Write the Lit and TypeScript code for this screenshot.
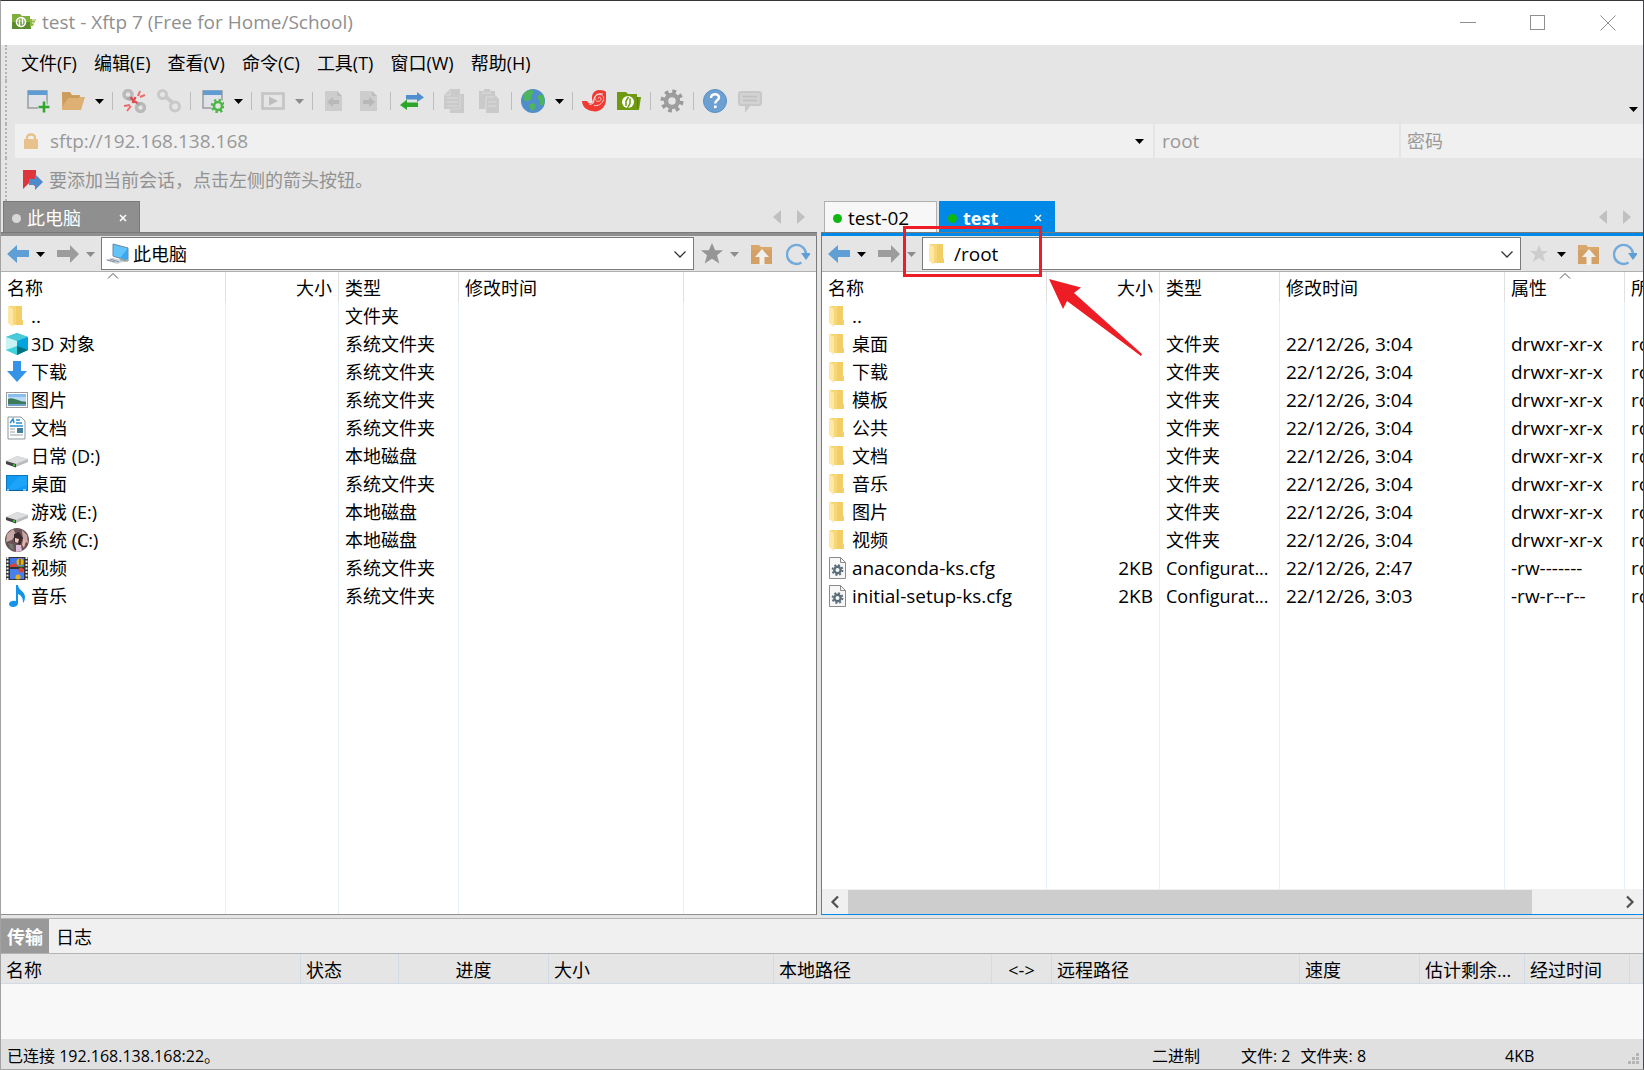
import { LitElement, html, css, svg, nothing } from "lit";
import { customElement, property } from "lit/decorators.js";
import { classMap } from "lit/directives/class-map.js";

const G = "#9c9c9c";

const shapes: Record<string, any> = {
  app: svg`<path d="M0 4h8l2 2h8v13H0z" fill="#7fae3c"/><path d="M0 12h19v7H0z" fill="#5c8c2e"/><path d="M18 9h6l-3 7h-2l-1 3z" fill="#8dba3f"/><path d="M20 10h3M20 13h2" stroke="#fff"/><circle cx="9" cy="12" r="4.500" fill="none" stroke="#fff" stroke-width="1.600"/><path d="M7.500 16V9.500M10.500 8v6.500" stroke="#fff" stroke-width="1.600"/>`,
  newwin: svg`<rect x="2" y="2" width="19" height="17" fill="#dfe2e6" stroke="#9a9da0" stroke-width="1.500"/><rect x="2" y="1.500" width="19" height="4.500" fill="#5f9cd3"/><path d="M18 12v12M12 18h12" stroke="#e5e5e5" stroke-width="5"/><path d="M18 12.500v11M12.500 18h11" stroke="#2fa72b" stroke-width="2.600"/>`,
  open: svg`<path d="M1 3h8l2 3h8v3H6L1 20z" fill="#d2a05f"/><path d="M1 20V9h6l2-1h15l-4 13H1z" fill="#dfb074"/><path d="M1 4h8l2 3h7v2H7L2 17z" fill="#cc9c5c"/>`,
  unlink: svg`<g fill="none" stroke="#b9b9b9" stroke-width="3.400"><circle cx="6" cy="5.500" r="4"/><circle cx="18.500" cy="18.500" r="4"/></g><path d="M5 9l4 2M15 14l3 2" stroke="#aaa" stroke-width="3"/><path d="M8.500 8l3 4 4 2M10.500 14l3-6" stroke="#df4c50" stroke-width="2.400"/><g stroke="#ec6a6c" stroke-width="2"><path d="M16 7l2-5M18 8l5-2M8 16l-6 1M9 17l-4 5"/></g>`,
  link: svg`<g fill="none" stroke="#c9c9c9" stroke-width="3"><circle cx="5.500" cy="5.500" r="4"/><circle cx="18" cy="17.500" r="4.500"/><path d="M9 8l7 6" stroke-width="4"/></g>`,
  wingear: svg`<rect x="3" y="2" width="19" height="17" fill="#dfe2e6" stroke="#9a9da0" stroke-width="1.500"/><rect x="3" y="1.500" width="19" height="4.500" fill="#5f9cd3"/><circle cx="18" cy="17" r="7" fill="#e5e5e5"/><circle cx="18" cy="17" r="4" fill="none" stroke="#4cb748" stroke-width="2.600"/><circle cx="18" cy="17" r="6" fill="none" stroke="#4cb748" stroke-width="2.500" stroke-dasharray="2.300 2.412"/>`,
  play: svg`<rect x="1.500" y="4.500" width="21" height="15" fill="none" stroke="#c4c4c4" stroke-width="2.600"/><path d="M8 7.500l9 4.500-9 4.500z" fill="#bdbdbd"/>`,
  docl: svg`<path d="M3 2h12l5 5v15H3z" fill="#cdcdcd"/><path d="M15 2l5 5h-5z" fill="#bdbdbd"/><path d="M5 13l6-5v3h6v4h-6v3z" fill="#b8b8b8"/>`,
  docr: svg`<path d="M3 2h12l5 5v15H3z" fill="#cdcdcd"/><path d="M15 2l5 5h-5z" fill="#bdbdbd"/><path d="M18 13l-6-5v3H6v4h6v3z" fill="#b8b8b8"/>`,
  swap: svg`<path d="M6 6h11V3l7 5.500L17 13v-2.500H6z" fill="#4f8fd0"/><path d="M18 13.500H7v-3L0 16l7 5v-3h11z" fill="#2ba62b"/>`,
  copy: svg`<path d="M7 0h10v5h4v19H7v-4H1V6z" fill="#cacaca"/><path d="M7 1v5H2M4 9h11M4 13h11M4 17h11" stroke="#dcdcdc" fill="none"/><path d="M17 6v14H8" stroke="#d8d8d8" fill="none"/>`,
  paste: svg`<path d="M1 2h5V0h6v2h5v4l4 4v14H8v-4H1z" fill="#cacaca"/><path d="M4 4h9M8 20V8h9M10 13h8M10 17h8" stroke="#dcdcdc" fill="none"/>`,
  globe: svg`<circle cx="12" cy="12" r="12" fill="#4f8dcb"/><path d="M3 4.500Q6 1 11 .500l2 3-3 3v4l-4 2-4-2zM17 7l4-2q3 4 2.500 9l-3 3-2-2 1-3-3-2zM9 15l4-1 2 3-2 4-2 1-2-3z" fill="#4db55c"/>`,
  swirl: svg`<path d="M0 12h5c1 3 5 3 6 1C8 6 12 1 17 1q6 0 7 2v7C24 19 17 24 10 22 3 21 0 16 0 12z" fill="#f03a32"/><path d="M7 15c4 1 5-2 5-5 1-4 4-6 9-5" stroke="#e5e5e5" stroke-width="1.100" fill="none"/><path d="M16.500 10c-1-1 1-3 2.200-1.200s-1 4.700-4 3.200-1.700-6 2-6.500 6.300 3 4.300 6.500-5 5-9 4.500" stroke="#fbd0cd" stroke-width="1" fill="none"/>`,
  green: svg`<path d="M0 3h9l2 2h9v3h4l-2 13H0z" fill="#6f9a10"/><path d="M20.500 8v11" stroke="#547a08"/><circle cx="11" cy="13" r="6" fill="#fff"/><path d="M9 17v-5l2.500-4M13 9.500v5L10.500 19" stroke="#6f9a10" fill="none" stroke-width="1.500"/>`,
  gear: svg`<circle cx="12" cy="12" r="6" fill="none" stroke="#9d9d9d" stroke-width="4.500"/><circle cx="12" cy="12" r="9.500" fill="none" stroke="#999" stroke-width="4" stroke-dasharray="3.700 3.760"/>`,
  help: svg`<circle cx="12" cy="12" r="11.500" fill="#6c9fd2" stroke="#5b8fc4"/><path d="M8 9c0-5 8-5 8-.5 0 3-3.800 2.500-3.800 6" fill="none" stroke="#fff" stroke-width="2.400"/><rect x="11" y="16.500" width="2.600" height="2.600" fill="#fff"/>`,
  chat: svg`<path d="M3 2h18q3 0 3 3v9q0 3-3 3h-9l-5 7v-7H3q-3 0-3-3V5q0-3 3-3z" fill="#c8c8c8"/><rect x="2" y="4" width="20" height="11" rx="1" fill="#d2d2d2"/><path d="M5 7.500h14M5 11.500h14" stroke="#c0c0c0" stroke-width="1.600"/>`,
  lock: svg`<path d="M8 12V9q0-3.500 4-3.500T16 9v3" fill="none" stroke="#e8c18c" stroke-width="2.400"/><rect x="5" y="10" width="14" height="10" rx="1" fill="#e8c18c"/>`,
  flag: svg`<path d="M2 2h13v17l-6-5-7 7z" fill="#de343b"/><path d="M8 11h6V6l8 8-8 8v-5H8z" fill="#4d8bcd"/>`,
  back: svg`<path d="M1 12L11 3v5h12v7H11v6z" fill="#5f9fd6"/>`,
  fwd: svg`<path d="M23 12L14 3v5H1v7h13v6z" fill="${G}"/>`,
  star: svg`<path d="M12 1l3.200 7.200H23l-6 5 2.300 8.300L12 16.800l-7.300 4.700L7 13.200l-6-5h7.800z" fill="#969696"/>`,
  starOff: svg`<path d="M12 3l2.500 6H21l-5 4 2 7-6-4-6 4 2-7-5-4h6.500z" fill="#cdcdcd"/>`,
  up: svg`<path d="M1 3h8l2 2h11v17H1z" fill="#d9a86c"/><path d="M1 8h21v14H1z" fill="#d3a068"/><path d="M12 7l7 8h-4.500v8h-5v-8H5z" fill="#f1efec"/>`,
  refresh: svg`<path d="M15.500 20.500A9.500 9.500 0 1 1 20 12" fill="none" stroke="#74aadb" stroke-width="2.400"/><path d="M15 11h10l-5 7z" fill="#5f9fd6"/>`,
  folder: svg`<path d="M4 2h13v14l1 1v4H7z" fill="#f7d778"/><path d="M11 2h6v14l1 1v4h-7z" fill="#f3cd66"/><path d="M3 2l5 3v18l-5-4z" fill="#ffe8a6"/>`,
  pc: svg`<path d="M8 2l15 4v13L8 14z" fill="#3ba9f2"/><path d="M8 2l15 4-8 10-7-2z" fill="#63c4fa"/><path d="M8 2l15 4v13L8 14z" fill="none" stroke="#6b8ba6"/><path d="M0 18l8-2 12 3-8 3z" fill="#ccd2d9"/><path d="M2 18l8 2M5 17l9 3" stroke="#8e969f"/><path d="M15 17l5 2 3-1" stroke="#9aa" fill="none" stroke-width="2"/>`,
  cube: svg`<path d="M12 1l11 4v13l-11 5L1 18V5z" fill="#27bfd2"/><path d="M1 5l11-4 11 4-11 4z" fill="#4cc9d8"/><path d="M1 5l11 4v9L1 18z" fill="#c9f3f2"/><path d="M12 9l11-4v13l-11-1z" fill="#00a5dd"/><path d="M12 14l11 4-11 5z" fill="#00737f"/><path d="M12 14v9L1 18z" fill="#3fd3de"/>`,
  down: svg`<path d="M8 1h8v10h6L12 22 2 11h6z" fill="#3694e8"/>`,
  pic: svg`<rect x="1.500" y="4.500" width="21" height="15" fill="#fff" stroke="#9c9c9c"/><rect x="3" y="6" width="18" height="12" fill="#8abdf0"/><path d="M3 9h18v4H3z" fill="#b9dcf5"/><path d="M3 11c3-2 7 0 10 1s5 2 8 2v3H3z" fill="#3d7b5b"/><path d="M3 16h18v2H3z" fill="#6fa0c9"/>`,
  doc: svg`<path d="M3 1h13l4 4v18H3z" fill="#fff" stroke="#8f979e"/><path d="M5 7l3-4 1 4M11 4h4M11 7h6" stroke="#2b8ed0" fill="none" stroke-width="1.500"/><path d="M5 10h13" stroke="#2b8ed0" stroke-width="1.500"/><path d="M5 13h5M5 16h5M5 19h13" stroke="#9aa2a9"/><rect x="12" y="12" width="6" height="5" fill="#447f9c"/>`,
  disk: svg`<path d="M1 17l11-5 11 3v3l-12 5-10-3z" fill="#b9bbbd"/><path d="M1 17l11-5 11 3-12 5z" fill="#dcdedf"/><path d="M1 17l10 3v3.500L1 20z" fill="#454545"/><rect x="8" y="20" width="2" height="2" fill="#35c135"/>`,
  desk: svg`<rect x="1.500" y="3.500" width="21" height="15" fill="#0f9bf5" stroke="#0c76bd"/><path d="M14 4h8v9L9 18H2z" fill="#2cabfb" opacity=".5"/><path d="M2 18.500h20" stroke="#0a5e9c"/><path d="M2 18h2M18 18h3" stroke="#fff"/>`,
  face: svg`<circle cx="12" cy="12" r="12" fill="#6a5257"/><path d="M2 6l6-5 3 5-4 6-6 2zM17 2l5 5 1 8-5-2z" fill="#c7a8a4"/><path d="M9 6l5-2 4 6-3 7-6-3z" fill="#3a2a30"/><path d="M10 10l4 1-1 4-3-1z" fill="#efc7b6"/><path d="M11 17l5 0 1 6-6 1z" fill="#dcbcd6"/><path d="M3 15l5 1 1 6-4-2z" fill="#6f7b6f"/><path d="M18 11l3 2-2 7-2-3z" fill="#e8b3a5"/>`,
  film: svg`<rect x="1" y="1" width="22" height="23" fill="#333"/><rect x="5" y="2" width="14" height="9" fill="#3f78e6"/><rect x="5" y="13" width="14" height="10" fill="#4a80ee"/><path d="M2.500 1v23M21.500 1v23" stroke="#eee" stroke-width="2" stroke-dasharray="2 1.500"/><circle cx="15" cy="6" r="3.500" fill="#e7b21d"/><path d="M15 3v6" stroke="#2a2a2a"/><path d="M5 9l4-2 4 3v1H5z" fill="#d8443a"/><path d="M12 10h6v1h-6z" fill="#2f9a48"/><circle cx="16" cy="14" r="2.500" fill="#d8443a"/><circle cx="13" cy="21" r="2.500" fill="#e7b21d"/>`,
  music: svg`<path d="M11 1h2c0 5 7 6 7 12 0 3-1 5-2 6 0-5-1-7-5-9v9c0 3-3 4-5 4s-4-1-4-3 3-4 7-3z" fill="#1593ea"/>`,
  cfg: svg`<path d="M3.500 1.500h11l5 5v16h-16z" fill="#f7f7f7" stroke="#8b8b8b"/><path d="M14.500 1.500v5h5" fill="none" stroke="#8b8b8b"/><circle cx="11.500" cy="14" r="3.200" fill="none" stroke="#5a6d79" stroke-width="2.400"/><circle cx="11.500" cy="14" r="5" fill="none" stroke="#5a6d79" stroke-width="1.800" stroke-dasharray="2 1.927"/>`,
  caret: svg`<path d="M8 10h9l-4.500 5z" fill="currentColor"/>`,
  chevd: svg`<path d="M6.500 9.500l5.500 5.500 5.500-5.500" fill="none" stroke="#333" stroke-width="1.300"/>`,
  triL: svg`<path d="M16 5v14l-8-7z" fill="#c0c0c0"/>`,
  triR: svg`<path d="M8 5v14l8-7z" fill="#c0c0c0"/>`,
  scrL: svg`<path d="M15 6.500l-5.500 5.500 5.500 5.500" fill="none" stroke="#505050" stroke-width="2.200"/>`,
  scrR: svg`<path d="M9 6.500l5.500 5.500-5.500 5.500" fill="none" stroke="#505050" stroke-width="2.200"/>`,
  min: svg`<path d="M4 12.500h16" stroke="#8f8f8f"/>`,
  max: svg`<rect x="4.500" y="5.500" width="14" height="14" fill="none" stroke="#8f8f8f"/>`,
  close: svg`<path d="M4.500 5.500l15 15M19.500 5.500l-15 15" stroke="#8f8f8f"/>`,
  x: svg`<path d="M9 9l6 6M15 9l-6 6" stroke="#fff" stroke-width="1.500"/>`,
  sort: svg`<path d="M7 14.500l5-5 5 5" fill="none" stroke="#555"/>`,
  grip: svg`<path d="M17 9h3v3h-3zM13 13h3v3h-3zM17 13h3v3h-3zM9 17h3v3H9zM13 17h3v3h-3zM17 17h3v3h-3z" fill="#b5b5b5"/>`,
};

const icon = (name: string, cls = "") =>
  html`<svg class="ic ${cls}" viewBox="0 0 24 24" aria-hidden="true">${shapes[name]}</svg>`;

const latin = (s?: string) => (s && /^[\x20-\x7e]+$/.test(s) ? "latin" : "");

const shared = css`
  * { box-sizing: border-box; }
  button, input, select {
    font: inherit; color: inherit; background: none; border: 0;
    border-radius: 0; padding: 0; margin: 0; outline: 0; appearance: none; min-width: 0;
  }
  .ic { display: block; width: 24px; height: 24px; flex: none; }
  .btn { display: flex; align-items: center; justify-content: center; flex: none; }
  .caret { width: 9px; }
  .caret.dim { color: #8c8c8c; }
  .latin { font-size: 19px; }
  table { border-collapse: separate; border-spacing: 0; table-layout: fixed; }
  th, td {
    font-weight: 400; text-align: left; padding: 0 6px;
    white-space: nowrap; overflow: hidden;
  }
  .right { text-align: right; }
  .center { text-align: center; }
`;

interface Tab { label: string; active?: boolean }
interface Col { label: string; width: number; align?: string; sorted?: boolean; compact?: boolean }
interface Row { icon: string; cells: string[] }

@customElement("file-pane")
export class FilePane extends LitElement {
  @property({ attribute: false }) tabs: Tab[] = [];
  @property({ attribute: false }) cols: Col[] = [];
  @property({ attribute: false }) rows: Row[] = [];
  @property() path = "";
  @property() pathIcon = "pc";
  @property({ type: Boolean, reflect: true }) remote = false;

  static styles = [shared, css`
    :host { --accent: #8f8f8f; display: flex; flex-direction: column; min-width: 0; min-height: 0; }
    :host([remote]) { --accent: #0089e6; }
    .tabs { display: flex; height: 31px; flex: none; padding-left: 2px; gap: 2px; align-items: stretch; }
    :host([remote]) .tabs { padding-left: 3px; }
    .tab {
      display: flex; align-items: center; padding: 2px 0 0 3px;
      border: 1px solid #b0b0b0; border-bottom: 0; background: #f7f7f7; width: 113px;
    }
    .tab.active { background: var(--accent); color: #fff; border-color: #7a7a7a; width: 137px; }
    :host([remote]) .tab.active { border-color: var(--accent); width: 116px; font-weight: 700; font-size: 18px; }
    .dot { width: 9px; height: 9px; border-radius: 50%; background: #0fb80f; margin: 0 6px 0 5px; }
    :host(:not([remote])) .dot { background: #d8d8d8; }
    .tab .x { margin-left: auto; margin-right: 4px; }
    .nav { display: flex; align-items: center; margin-left: auto; padding-right: 4px; }
    .rule { height: 4px; flex: none; background: var(--accent); border-top: 1px solid #7a7a7a; }
    .body { flex: 1; min-height: 0; display: flex; flex-direction: column; border-right: 1px solid #7a7a7a; border-bottom: 1px solid #8f8f8f; }
    :host([remote]) .body { border-right: 0; border-left: 1px solid #7a7a7a; border-bottom-color: #0089e6; }
    .bar { display: flex; align-items: center; height: 36px; flex: none; padding: 0 6px 0 5px; gap: 5px; border-bottom: 1px solid #b0b0b0; }
    .combo { flex: 1; display: flex; align-items: center; height: 33px; margin: 0 1px 0 2px; border: 1px solid #7a7a7a; background: #fff; padding: 0 1px 0 3px; }
    .combo select { flex: 1; align-self: stretch; padding-left: 4px; }
    .fwd { margin-left: 7px; }
    .fold { margin: 0 7px; }
    .list { flex: 1; min-height: 0; overflow: hidden; background: #fff; }
    table { height: 100%; width: 100%; }
    th, td { border-right: 1px solid #e6effa; }
    th { height: 30px; padding-top: 2px; border-right-color: #e0e0e0; position: relative; }
    td { height: 28px; }
    th:last-child, td:last-child { border-right: 0; }
    .name { display: flex; align-items: center; gap: 2px; margin-left: -2px; }
    .fill td { height: auto; }
    .trim { text-overflow: ellipsis; }
    .sort { position: absolute; left: 50%; top: -8px; margin-left: -12px; }
    .scroll { display: flex; align-items: center; height: 25px; flex: none; background: #f0f0f0; }
    .scroll .btn { width: 26px; }
    .track { flex: 1; height: 24px; display: flex; }
    .thumb { width: 89%; background: #cdcdcd; }
  `];

  render() {
    return html`
      <div class="tabs">
        ${this.tabs.map((t) => html`
          <button class="tab ${t.active ? "active" : ""} ${latin(t.label)}">
            <span class="dot"></span>${t.label}${t.active ? icon("x", "x") : nothing}
          </button>`)}
        <div class="nav">
          <button class="btn" aria-label="上一个标签">${icon("triL")}</button>
          <button class="btn" aria-label="下一个标签">${icon("triR")}</button>
        </div>
      </div>
      <div class="rule"></div>
      <div class="body">
        <div class="bar">
          <button class="btn" aria-label="后退">${icon("back")}</button>
          <button class="btn caret" aria-label="后退历史">${icon("caret")}</button>
          <button class="btn fwd" aria-label="前进">${icon("fwd")}</button>
          <button class="btn caret dim" aria-label="前进历史">${icon("caret")}</button>
          <div class="combo">
            ${icon(this.pathIcon)}
            <select class=${latin(this.path)} aria-label="路径"><option>${this.path}</option></select>
            ${icon("chevd")}
          </div>
          <button class="btn" aria-label="收藏">${icon(this.remote ? "starOff" : "star")}</button>
          <button class="btn caret ${this.remote ? "" : "dim"}" aria-label="收藏列表">${icon("caret")}</button>
          <button class="btn fold" aria-label="上级文件夹">${icon("up")}</button>
          <button class="btn" aria-label="刷新">${icon("refresh")}</button>
        </div>
        <div class="list">
          <table>
            <colgroup>${this.cols.map((c) => html`<col width=${c.width || nothing}>`)}</colgroup>
            <thead><tr>${this.cols.map((c) => html`
              <th class=${c.align ?? ""}>${c.label}${c.sorted ? icon("sort", "sort") : nothing}</th>`)}</tr></thead>
            <tbody>
              ${this.rows.map((r) => html`<tr>${this.cols.map((c, i) => i === 0
                ? html`<td><div class="name">${icon(r.icon)}<span class=${latin(r.cells[0])}>${r.cells[0]}</span></div></td>`
                : html`<td class="trim ${c.align ?? ""} ${c.compact ? "" : latin(r.cells[i])}">${r.cells[i] ?? ""}</td>`)}</tr>`)}
              <tr class="fill">${this.cols.map(() => html`<td></td>`)}</tr>
            </tbody>
          </table>
        </div>
        ${this.remote ? html`
          <div class="scroll">
            <button class="btn" aria-label="向左滚动">${icon("scrL")}</button>
            <div class="track"><div class="thumb"></div></div>
            <button class="btn" aria-label="向右滚动">${icon("scrR")}</button>
          </div>` : nothing}
      </div>`;
  }
}

const MENUS = ["文件(F)", "编辑(E)", "查看(V)", "命令(C)", "工具(T)", "窗口(W)", "帮助(H)"];

const TOOLS: [string, string][] = [
  ["newwin", "新建"], ["open", "打开"], ["caret", "打开列表"], ["sep", ""],
  ["unlink", "断开"], ["link", "重新连接"], ["sep", ""],
  ["wingear", "属性"], ["caret", "属性列表"], ["sep", ""],
  ["play", "运行"], ["dim", "运行列表"], ["sep", ""],
  ["docl", "传输到左侧"], ["docr", "传输到右侧"], ["sep", ""],
  ["swap", "同步"], ["sep", ""],
  ["copy", "复制"], ["paste", "粘贴"], ["sep", ""],
  ["globe", "编码"], ["caret", "编码列表"], ["sep", ""],
  ["swirl", "Xshell"], ["green", "Xftp"], ["sep", ""],
  ["gear", "选项"], ["sep", ""],
  ["help", "帮助"], ["chat", "反馈"],
];

const SYS = "系统文件夹";
const DISK = "本地磁盘";
const local = (ic: string, name: string, type: string): Row => ({ icon: ic, cells: [name, "", type] });
const LOCAL: Row[] = [
  local("folder", "..", "文件夹"), local("cube", "3D 对象", SYS), local("down", "下载", SYS),
  local("pic", "图片", SYS), local("doc", "文档", SYS), local("disk", "日常 (D:)", DISK),
  local("desk", "桌面", SYS), local("disk", "游戏 (E:)", DISK), local("face", "系统 (C:)", DISK),
  local("film", "视频", SYS), local("music", "音乐", SYS),
];
const REMOTE: Row[] = [
  { icon: "folder", cells: [".."] },
  ...["桌面", "下载", "模板", "公共", "文档", "音乐", "图片", "视频"].map((n) => ({
    icon: "folder", cells: [n, "", "文件夹", "22/12/26, 3:04", "drwxr-xr-x", "root"],
  })),
  { icon: "cfg", cells: ["anaconda-ks.cfg", "2KB", "Configurat...", "22/12/26, 2:47", "-rw-------", "root"] },
  { icon: "cfg", cells: ["initial-setup-ks.cfg", "2KB", "Configurat...", "22/12/26, 3:03", "-rw-r--r--", "root"] },
];

const LOCAL_COLS: Col[] = [
  { label: "名称", width: 225, sorted: true }, { label: "大小", width: 113, align: "right" },
  { label: "类型", width: 120 }, { label: "修改时间", width: 225 }, { label: "", width: 0 },
];
const REMOTE_COLS: Col[] = [
  { label: "名称", width: 225 }, { label: "大小", width: 113, align: "right" },
  { label: "类型", width: 120, compact: true }, { label: "修改时间", width: 225 },
  { label: "属性", width: 120, sorted: true }, { label: "所有者", width: 120 },
];
const QUEUE: Col[] = [
  { label: "名称", width: 300 }, { label: "状态", width: 98 }, { label: "进度", width: 150, align: "center" },
  { label: "大小", width: 225 }, { label: "本地路径", width: 218 }, { label: "<->", width: 60, align: "center" },
  { label: "远程路径", width: 248 }, { label: "速度", width: 120 }, { label: "估计剩余...", width: 105 },
  { label: "经过时间", width: 105 }, { label: "", width: 0 },
];

@customElement("app-root")
export class AppRoot extends LitElement {
  static styles = [shared, css`
    :host { display: block; }
    .win {
      position: relative; min-height: 100vh; display: flex; flex-direction: column;
      font: 18px/24px "Open Sans", "Noto Sans CJK SC", sans-serif; color: #000; background: #e5e5e5;
      border: 1px solid #a3a3a3; border-top-color: #35353a; border-right-color: #45464a;
    }
    .title { display: flex; align-items: center; height: 44px; flex: none; background: #fff; color: #8f8f8f; padding: 0 23px 2px 11px; gap: 6px; }
    .title h1 { font: inherit; font-size: 19px; margin: 0; flex: 1; }
    .ctl { display: flex; gap: 46px; }
    .head { padding-left: 4px; flex: none; }
    .strip { display: flex; align-items: center; border-left: 2px dotted #b4b4b4; }
    .menu { height: 36px; gap: 17px; padding-left: 14px; }
    .tools { height: 43px; gap: 9px; padding: 0 0 3px 19px; }
    .tools .btn + .btn:not(.caret) { margin-left: 2px; }
    .sep { width: 1px; height: 18px; background: #bdbdbd; }
    .more { margin: 16px 6px 0 auto; }
    .addr { height: 34px; gap: 2px; padding-left: 8px; color: #999; }
    .field { display: flex; align-items: center; height: 34px; background: #f0f0f0; font-size: 19px; }
    .field input { flex: 1; height: 100%; }
    .field input::placeholder { color: #999; opacity: 1; font-size: 18px; }
    .host { flex: 1; padding: 0 2px 0 4px; gap: 7px; }
    .host .ic:last-child { color: #000; }
    .user { width: 244px; padding-left: 7px; }
    .pass { width: 242px; padding-left: 6px; }
    .sess { height: 43px; padding-left: 14px; gap: 4px; color: #929292; }
    .panes { flex: 1; min-height: 0; display: grid; grid-template-columns: minmax(0, 816fr) minmax(0, 822fr); gap: 4px; }
    .queue { flex: none; margin-top: 3px; border-top: 1px solid #b4b4b4; background: #f8f8f8; }
    .qtabs { display: flex; height: 35px; background: #f0f0f0; border-bottom: 1px solid #b4b4b4; }
    .qtab { padding: 2px 7px 0; }
    .qtab.on { background: #999; color: #fff; font-weight: 700; padding: 2px 6px 0; }
    .queue table { width: 100%; }
    .queue th { height: 30px; background: #e5e5e5; border-right: 1px solid #d2dbe6; border-bottom: 1px solid #d2dbe6; padding: 2px 5px 0; }
    .queue .center { padding: 2px 0 0; }
    .qbody { height: 55px; }
    .status { display: flex; align-items: center; height: 30px; flex: none; background: #e0e0e0; font-size: 16px; padding: 3px 0 0 6px; }
    .conn { flex: 1; }
    .mode { width: 89px; }
    .count { width: 264px; display: flex; gap: 10px; }
    .size { width: 114px; }
    .mark { position: absolute; left: 902px; top: 225px; width: 139px; height: 51px; border: 3px solid #ee1c25; }
    .arrow { position: absolute; left: 1048px; top: 278px; width: 94px; height: 78px; }
  `];

  render() {
    return html`
      <div class="win">
        <header class="title">
          ${icon("app")}
          <h1>test - Xftp 7 (Free for Home/School)</h1>
          <div class="ctl">
            <button class="btn" aria-label="最小化">${icon("min")}</button>
            <button class="btn" aria-label="最大化">${icon("max")}</button>
            <button class="btn" aria-label="关闭">${icon("close")}</button>
          </div>
        </header>
        <div class="head">
          <nav class="strip menu">${MENUS.map((m) => html`<button>${m}</button>`)}</nav>
          <div class="strip tools">
            ${TOOLS.map(([n, label]) => n === "sep"
              ? html`<span class="sep"></span>`
              : html`<button aria-label=${label} class=${classMap({ btn: true, caret: n === "caret" || n === "dim", dim: n === "dim" })}>
                  ${icon(n === "dim" ? "caret" : n)}</button>`)}
            <button class="btn caret more" aria-label="更多">${icon("caret")}</button>
          </div>
          <div class="strip addr">
            <label class="field host">${icon("lock")}<input aria-label="主机" .value=${"sftp://192.168.138.168"}>${icon("caret")}</label>
            <label class="field user"><input aria-label="用户名" .value=${"root"}></label>
            <label class="field pass"><input type="password" aria-label="密码" placeholder="密码"></label>
          </div>
          <div class="strip sess">
            <button class="btn" aria-label="添加会话">${icon("flag")}</button>
            <span>要添加当前会话，点击左侧的箭头按钮。</span>
          </div>
        </div>
        <main class="panes">
          <file-pane path="此电脑" pathIcon="pc" .tabs=${[{ label: "此电脑", active: true }]} .cols=${LOCAL_COLS} .rows=${LOCAL}></file-pane>
          <file-pane remote path="/root" pathIcon="folder" .tabs=${[{ label: "test-02" }, { label: "test", active: true }]}
            .cols=${REMOTE_COLS} .rows=${REMOTE}></file-pane>
        </main>
        <section class="queue">
          <div class="qtabs"><button class="qtab on">传输</button><button class="qtab">日志</button></div>
          <table>
            <colgroup>${QUEUE.map((c) => html`<col width=${c.width || nothing}>`)}</colgroup>
            <thead><tr>${QUEUE.map((c) => html`<th class=${c.align ?? ""}>${c.label}</th>`)}</tr></thead>
          </table>
          <div class="qbody"></div>
        </section>
        <footer class="status">
          <span class="conn">已连接 192.168.138.168:22。</span>
          <span class="mode">二进制</span>
          <span class="count"><span>文件: 2</span><span>文件夹: 8</span></span>
          <span class="size">4KB</span>
          ${icon("grip")}
        </footer>
        <div class="mark"></div>
        <svg class="arrow" viewBox="0 0 94 78" aria-hidden="true">
          <path d="M0 0L32 8.500L25 14L93 75L92 77L18 22L14 30Z" fill="#ee1c25"/>
        </svg>
      </div>`;
  }
}
